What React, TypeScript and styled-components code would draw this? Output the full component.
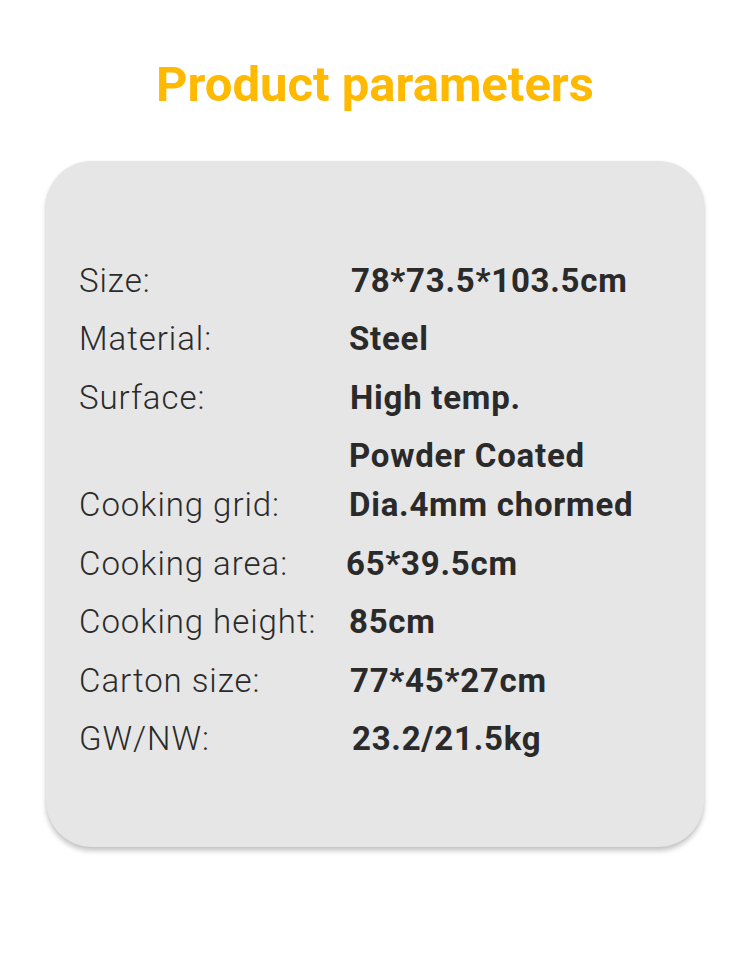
import React from "react";
import styled, { createGlobalStyle } from "styled-components";

const Global = createGlobalStyle`
  html, body { margin: 0; padding: 0; background: #ffffff; }
  body { font-family: Roboto, "Noto Sans", sans-serif; }
`;

const Page = styled.div`
  width: 750px;
  height: 954px;
  display: flex;
  flex-direction: column;
  align-items: center;
  box-sizing: border-box;
  padding-top: 55px;
`;

const Title = styled.h1`
  margin: 0;
  font-family: Roboto, "Noto Sans", sans-serif;
  font-weight: 700;
  font-size: 49px;
  line-height: 60px;
  color: #ffb901;
`;

const Card = styled.div`
  margin-top: 46px;
  width: 658px;
  height: 686px;
  box-sizing: border-box;
  background: #e6e6e6;
  border-radius: 46px;
  box-shadow: 0 4px 5px rgba(0, 0, 0, 0.22), 0 0 2px rgba(0, 0, 0, 0.08);
  padding: 90px 0 0 33px;
  display: flex;
  flex-direction: column;
`;

const Row = styled.div<{ $pull?: number }>`
  display: grid;
  grid-template-columns: 270px 1fr;
  align-items: center;
  height: 58.5px;
  margin-top: ${(p) => (p.$pull ? -p.$pull : 0)}px;
`;

const Label = styled.div`
  font-family: Roboto, sans-serif;
  font-weight: 300;
  font-size: 33px;
  letter-spacing: 0.95px;
  color: #2b2b2b;
  white-space: nowrap;
`;

const Value = styled.div<{ $shift: number }>`
  font-family: Roboto, sans-serif;
  font-weight: 700;
  font-size: 33px;
  letter-spacing: 0.75px;
  color: #2a2a2a;
  white-space: nowrap;
  margin-left: ${(p) => p.$shift}px;
`;

const rows: { l: string; v: string; s: number; pull?: number }[] = [
  { l: "Size:", v: "78*73.5*103.5cm", s: 2 },
  { l: "Material:", v: "Steel", s: 0 },
  { l: "Surface:", v: "High temp.", s: 1 },
  { l: "", v: "Powder Coated", s: 0 },
  { l: "Cooking grid:", v: "Dia.4mm chormed", s: 0, pull: 9.5 },
  { l: "Cooking area:", v: "65*39.5cm", s: -3 },
  { l: "Cooking height:", v: "85cm", s: 0 },
  { l: "Carton size:", v: "77*45*27cm", s: 1 },
  { l: "GW/NW:", v: "23.2/21.5kg", s: 3 },
];

export default function App() {
  return (
    <Page>
      <Global />
      <Title>Product parameters</Title>
      <Card>
        {rows.map((r, i) => (
          <Row key={i} $pull={r.pull}>
            <Label>{r.l}</Label>
            <Value $shift={r.s}>{r.v}</Value>
          </Row>
        ))}
      </Card>
    </Page>
  );
}
